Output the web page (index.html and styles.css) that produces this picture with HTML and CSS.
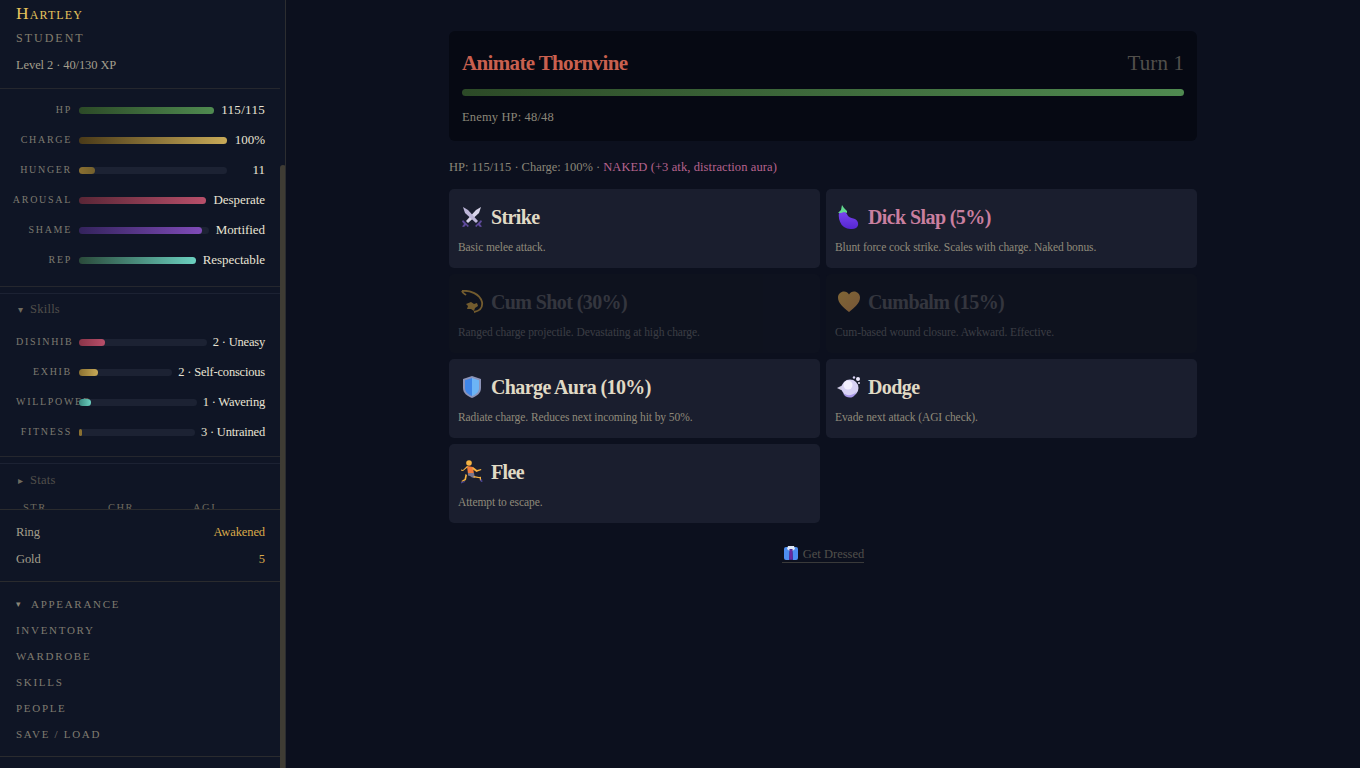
FILE: index.html
```html
<!DOCTYPE html>
<html lang="en">
<head>
<meta charset="utf-8">
<title>Combat</title>
<link rel="stylesheet" href="styles.css">
</head>
<body>
<div class="app">
  <aside class="sidebar">
    <div class="scrollthumb"></div>
    <header class="hero">
      <div class="hero-name">Hartley</div>
      <div class="hero-class">Student</div>
      <div class="hero-level">Level 2 · 40/130 XP</div>
    </header>
    <section class="meters">
      <div class="meter"><span class="meter-label">HP</span><div class="track"><div class="fill fill-green" style="width:100%"></div></div><span class="meter-value meter-value-num">115/115</span></div>
      <div class="meter"><span class="meter-label">Charge</span><div class="track"><div class="fill fill-gold" style="width:100%"></div></div><span class="meter-value">100%</span></div>
      <div class="meter"><span class="meter-label">Hunger</span><div class="track"><div class="fill fill-hunger" style="width:11%"></div></div><span class="meter-value">11</span></div>
      <div class="meter"><span class="meter-label">Arousal</span><div class="track"><div class="fill fill-rose" style="width:100%"></div></div><span class="meter-value">Desperate</span></div>
      <div class="meter"><span class="meter-label">Shame</span><div class="track"><div class="fill fill-violet" style="width:95%"></div></div><span class="meter-value">Mortified</span></div>
      <div class="meter"><span class="meter-label">Rep</span><div class="track"><div class="fill fill-teal" style="width:100%"></div></div><span class="meter-value">Respectable</span></div>
    </section>
    <section class="fold fold-skills">
      <div class="fold-head"><span class="caret">▾</span>Skills</div>
      <div class="meter"><span class="meter-label">Disinhib</span><div class="track"><div class="fill fill-rose-s" style="width:20%"></div></div><span class="meter-value">2 · Uneasy</span></div>
      <div class="meter"><span class="meter-label">Exhib</span><div class="track"><div class="fill fill-gold-s" style="width:20%"></div></div><span class="meter-value">2 · Self-conscious</span></div>
      <div class="meter"><span class="meter-label">Willpower</span><div class="track"><div class="fill fill-teal-s" style="width:10%"></div></div><span class="meter-value">1 · Wavering</span></div>
      <div class="meter"><span class="meter-label">Fitness</span><div class="track"><div class="fill fill-gold-d" style="width:3%"></div></div><span class="meter-value">3 · Untrained</span></div>
    </section>
    <section class="fold fold-stats">
      <div class="fold-head"><span class="caret caret-small">▸</span>Stats</div>
      <div class="stat-grid"><span>STR</span><span>CHR</span><span>AGI</span></div>
    </section>
    <section class="purse">
      <div class="purse-row"><span>Ring</span><span class="purse-value">Awakened</span></div>
      <div class="purse-row"><span>Gold</span><span class="purse-value">5</span></div>
    </section>
    <nav class="nav">
      <a class="nav-item nav-open"><span class="nav-caret">▾</span>Appearance</a>
      <a class="nav-item">Inventory</a>
      <a class="nav-item">Wardrobe</a>
      <a class="nav-item">Skills</a>
      <a class="nav-item">People</a>
      <a class="nav-item">Save / Load</a>
    </nav>
  </aside>

  <main class="main">
    <div class="column">
      <section class="enemy">
        <div class="enemy-top"><h1 class="enemy-name">Animate Thornvine</h1><span class="enemy-turn">Turn 1</span></div>
        <div class="enemy-bar"></div>
        <div class="enemy-hp">Enemy HP: 48/48</div>
      </section>
      <p class="status"><span class="status-base">HP: 115/115 · Charge: 100% · </span><span class="status-naked">NAKED (+3 atk, distraction aura)</span></p>
      <div class="actions">
        <button class="action">
          <span class="action-title"><span class="action-icon"><svg viewBox="0 0 24 24" width="24" height="24"><path d="M21 2l-2 6L8 18l-2-2L16 5z" fill="#d9d5ea"/><path d="M3 2l2 6 11 10 2-2L8 5z" fill="#bdb6d8"/><path d="M3 15l6 6-1.500 1-1.500-2-2 2-2-.5 2-2.500-2-2.500zM21 15l-6 6 1.500 1 1.500-2 2 2 2-.5-2-2.500 2-2.500z" fill="#5f4a9c"/></svg></span>Strike</span>
          <span class="action-desc">Basic melee attack.</span>
        </button>
        <button class="action action-naked">
          <span class="action-title"><span class="action-icon"><svg viewBox="0 0 24 24" width="24" height="24"><defs><linearGradient id="plum" x1="0" y1="0" x2="0" y2="1"><stop offset="0" stop-color="#7c48f2"/><stop offset="1" stop-color="#5526d0"/></linearGradient></defs><path d="M2 8c0-2 3-3 5-2 2 1 3 3 4 5 2 2 5 2 7 3 4 2 4 7 1 9-3 1.500-8 1.500-12-1C3 19 1 13 2 8z" fill="url(#plum)"/><path d="M1 8l3-3 1-5 2 3 3 3 0 2-3-1-3 1z" fill="#62d98e"/></svg></span>Dick Slap (5%)</span>
          <span class="action-desc">Blunt force cock strike. Scales with charge. Naked bonus.</span>
        </button>
        <button class="action action-off">
          <span class="action-title"><span class="action-icon"><svg viewBox="0 0 24 24" width="24" height="24"><path d="M2 1c8-1 18 3 20 11 1 6-3 9-8 10" fill="none" stroke="#d8a63e" stroke-width="1.800"/><path d="M2 1c1 3 3 3 4 4" fill="none" stroke="#d8a63e" stroke-width="1.800"/><path d="M6 14l5-2 3 2 3-1 1 3-3 2-1 3-3-2-4 0 1-3z" fill="#d8a63e"/></svg></span>Cum Shot (30%)</span>
          <span class="action-desc">Ranged charge projectile. Devastating at high charge.</span>
        </button>
        <button class="action action-off">
          <span class="action-title"><span class="action-icon"><svg viewBox="0 0 24 24" width="24" height="24"><defs><linearGradient id="balm" x1="0" y1="0" x2="1" y2="1"><stop offset="0" stop-color="#f2ba4c"/><stop offset="1" stop-color="#e09a52"/></linearGradient></defs><path d="M12 22C6 17 1 13 1 7.500 1 4 4 1.500 7 1.500c2 0 4 1 5 3 1-2 3-3 5-3 3 0 6 2.500 6 6C23 13 18 17 12 22z" fill="url(#balm)"/></svg></span>Cumbalm (15%)</span>
          <span class="action-desc">Cum-based wound closure. Awkward. Effective.</span>
        </button>
        <button class="action">
          <span class="action-title"><span class="action-icon"><svg viewBox="0 0 24 24" width="24" height="24"><path d="M12 1l9 3v9c0 5-4 8-9 10-5-2-9-5-9-10V4z" fill="#8d94b8"/><path d="M12 3l7 2.200V13c0 4-3 6.500-7 8z" fill="#6cb4f5"/><path d="M12 3L5 5.200V13c0 4 3 6.500 7 8z" fill="#3f86e8"/></svg></span>Charge Aura (10%)</span>
          <span class="action-desc">Radiate charge. Reduces next incoming hit by 50%.</span>
        </button>
        <button class="action">
          <span class="action-title"><span class="action-icon"><svg viewBox="0 0 24 24" width="24" height="24"><path d="M0 13l8-4 0 8z" fill="#cfcbe4"/><circle cx="13" cy="13" r="8.500" fill="#d8d2f5"/><circle cx="11" cy="10" r="4.500" fill="#f3f0ff"/><path d="M6 18c3 3 10 3 13-1-1 4-3 5.500-6 5.500S7 21 6 18z" fill="#a898e8"/><circle cx="21" cy="4" r="2" fill="#eeeaff"/><circle cx="17" cy="2.500" r="1.200" fill="#d8d2f5"/><circle cx="22" cy="8" r="1" fill="#eeeaff"/></svg></span>Dodge</span>
          <span class="action-desc">Evade next attack (AGI check).</span>
        </button>
        <button class="action">
          <span class="action-title"><span class="action-icon"><svg viewBox="0 0 24 24" width="24" height="24"><circle cx="9" cy="3" r="2.800" fill="#f5b342"/><path d="M7 6l6 1 1 7-6 0z" fill="#f07a3a"/><path d="M8 13l6 0 1 5-3-.5-2-1.500-2-.5z" fill="#77748c"/><path d="M8 7L3 11l-2-.5 0-1 2 .5 4-4zM13 7l4 3 4-1 .4 1-5 2-4-3z" fill="#f5b342"/><path d="M7 15l-1 5-4 2-.5-1 3-2 1-5zM14 16l5 1 2-.3 0 4-1 0-.3-2.500-6.700-1z" fill="#f5b342"/><path d="M1 22l4-1 0 1-4 1.500zM20 20l2-1 .5 3-1.500 0z" fill="#46408c"/></svg></span>Flee</span>
          <span class="action-desc">Attempt to escape.</span>
        </button>
      </div>
      <div class="footer-row">
        <a class="dress"><svg class="dress-icon" viewBox="0 0 14 14" width="14" height="14"><rect x="0" y="1" width="14" height="13" rx="2" fill="#4d8df0"/><path d="M4 0h6l1 3-4 3-4-3z" fill="#dfe8f8"/><path d="M5.500 3h3l.5 11H5z" fill="#4a2a8c"/><path d="M6 4h2l.5 9H5.500z" fill="#6a2a9c"/></svg>Get Dressed</a>
      </div>
    </div>
  </main>
</div>
</body>
</html>
```
FILE: styles.css
```css
* { box-sizing: border-box; }
html, body { margin: 0; height: 100%; overflow: hidden; }
body { background: #0c101e; color: #d8d2bd; font-family: "Liberation Serif", serif; }

.app { display: flex; height: 768px; }

.sidebar {
  position: relative;
  flex: 0 0 286px;
  height: 768px;
  overflow: hidden;
  background: #0f1525;
  border-right: 1px solid #2c2d30;
  padding-right: 5px;
}
.scrollthumb {
  position: absolute;
  right: -1px; top: 165px; bottom: 0;
  width: 6px;
  background: #3f3c34;
  border-radius: 3px 3px 0 0;
  z-index: 2;
}

.hero { height: 89px; padding: 3px 16px 0; border-bottom: 1px solid #25272e; }
.hero-name { font-size: 17.500px; line-height: 20px; font-variant: small-caps; color: #e6c35c; letter-spacing: 1.100px; }
.hero-class { margin-top: 7px; font-size: 12px; line-height: 16px; text-transform: uppercase; letter-spacing: 2px; color: #857f6e; }
.hero-level { margin-top: 11px; font-size: 12.500px; line-height: 16px; color: #a39e8c; letter-spacing: -.1px; }

.meters { padding: 6px 15px 11px 16px; height: 198px; border-bottom: 1px solid #25272e; }
.meter { display: flex; align-items: center; height: 30px; }
.meter-label {
  flex: 0 0 56px; width: 56px;
  margin-right: 7px;
  margin-top: -1px;
  font-size: 10px;
  letter-spacing: 1.700px;
  text-transform: uppercase;
  text-align: right;
  color: #7d7a70;
  white-space: nowrap;
  direction: rtl;
}
.fold-skills .meter-label { direction: ltr; text-align: right; }
.track { flex: 1 1 0; height: 7px; border-radius: 4px; background: #1c2233; position: relative; }
.fill { height: 100%; border-radius: 4px; }
.meter-value { margin-left: 7px; min-width: 31px; text-align: right; font-size: 13px; color: #e8e3d4; white-space: nowrap; letter-spacing: -.05px; }
.meter-value-num { letter-spacing: .3px; }
.fold-skills .meter-value { margin-left: 6px; font-size: 12.500px; letter-spacing: -.2px; }

.fill-green { background: linear-gradient(90deg, #2c4a27, #4f8a50); }
.fill-gold { background: linear-gradient(90deg, #4a3a18, #c8aa58); }
.fill-hunger { background: linear-gradient(90deg, #8a6f30, #73602e); }
.fill-rose { background: linear-gradient(90deg, #5a2636, #b84f6a); }
.fill-violet { background: linear-gradient(90deg, #33235c, #7f4bb8); }
.fill-teal { background: linear-gradient(90deg, #2a4a3a, #6bd0c0); }
.fill-rose-s { background: linear-gradient(90deg, #8a3448, #b84f6a); }
.fill-gold-s { background: linear-gradient(90deg, #8a7030, #c8aa58); }
.fill-teal-s { background: linear-gradient(90deg, #3a8a80, #6bd0c0); }
.fill-gold-d { background: #8a7030; }

.fold { margin-top: 6px; border-top: 1px solid #1c2233; border-bottom: 1px solid #25272e; padding: 0 15px 0 16px; }
.fold-skills { height: 164px; }
.fold-stats { height: 46px; overflow: hidden; border-bottom: 0; }
.fold-head { height: 31px; padding-left: 2px; display: flex; align-items: center; font-size: 12.500px; letter-spacing: .25px; color: #514f4b; }
.fold-skills .fold-head { margin-bottom: 2px; }
.fold-stats .fold-head { height: 33px; }
.caret { width: 12px; font-size: 10px; color: #6e6a5e; }
.caret-small { font-size: 10px; }
.stat-grid { display: grid; grid-template-columns: repeat(3, 85px); margin-top: 5px; padding-left: 7px; font-size: 10.500px; letter-spacing: 1.500px; color: #6e6a5e; }

.purse { height: 73px; padding: 9px 15px 0 16px; border-top: 1px solid #2a2b2e; border-bottom: 1px solid #2a2b2e; }
.purse-row { display: flex; justify-content: space-between; height: 27px; align-items: center; font-size: 12.500px; color: #a39e8c; letter-spacing: -.1px; }
.purse-value { color: #d8a94a; }

.nav { height: 175px; padding: 9px 16px 0; border-bottom: 1px solid #2a2b2e; display: flex; flex-direction: column; }
.nav-item { height: 26px; display: flex; align-items: center; font-size: 11px; letter-spacing: 1.700px; text-transform: uppercase; color: #7f7b70; }
.nav-caret { width: 15px; font-size: 9px; color: #8a8678; letter-spacing: 0; }

.main { flex: 1; min-width: 0; }
.column { width: 748px; margin: 0 auto; padding-top: 31px; }

.enemy { height: 110px; background: #060913; border-radius: 6px; padding: 0 13px; }
.enemy-top { display: flex; justify-content: space-between; align-items: center; height: 58px; padding-top: 7px; }
.enemy-name { margin: 0; font-size: 21px; font-weight: 700; color: #c9604f; letter-spacing: -.65px; }
.enemy-turn { font-size: 21px; color: #514f4b; letter-spacing: .1px; }
.enemy-bar { height: 7px; border-radius: 4px; background: linear-gradient(90deg, #2c4a27, #4f8a50); }
.enemy-hp { margin-top: 13px; font-size: 12.500px; line-height: 16px; color: #8a8678; letter-spacing: .15px; }

.status { margin: 18px 0 14px; font-size: 12.500px; line-height: 16px; color: #8a8678; }
.status-base { letter-spacing: -.03px; }
.status-naked { color: #b8648f; letter-spacing: .1px; }

.actions { display: grid; grid-template-columns: 1fr 1fr; column-gap: 6px; row-gap: 6.200px; grid-auto-rows: 78.900px; }
.action {
  display: flex; flex-direction: column; align-items: flex-start;
  padding: 14.600px 9px 0;
  border: 0; border-radius: 5px;
  background: #1a1e2e;
  font-family: inherit;
  text-align: left;
  color: #e0dac5;
}
.action-title { display: flex; align-items: center; height: 27px; font-size: 20px; font-weight: 700; letter-spacing: -.6px; }
.action-icon { flex: 0 0 33px; display: flex; padding-left: 2px; }
.action-desc { margin-top: 9.500px; font-size: 11.500px; line-height: 14px; color: #8f8a7a; letter-spacing: -.08px; }
.action-naked .action-title { color: #c97f9f; }
.action-off { opacity: .5; background: #10141f; color: #5c5c5e; }
.action-off .action-desc { color: #6a6a6a; }

.footer-row { display: flex; justify-content: center; margin-top: 22.300px; }
.dress { display: flex; align-items: center; gap: 5px; padding: 2px 0 1px 2px; height: 18px; border-bottom: 1px solid #3a3a3a; font-size: 12.500px; color: #514f4b; }
.dress-icon { flex: none; margin-top: -2px; }
```
